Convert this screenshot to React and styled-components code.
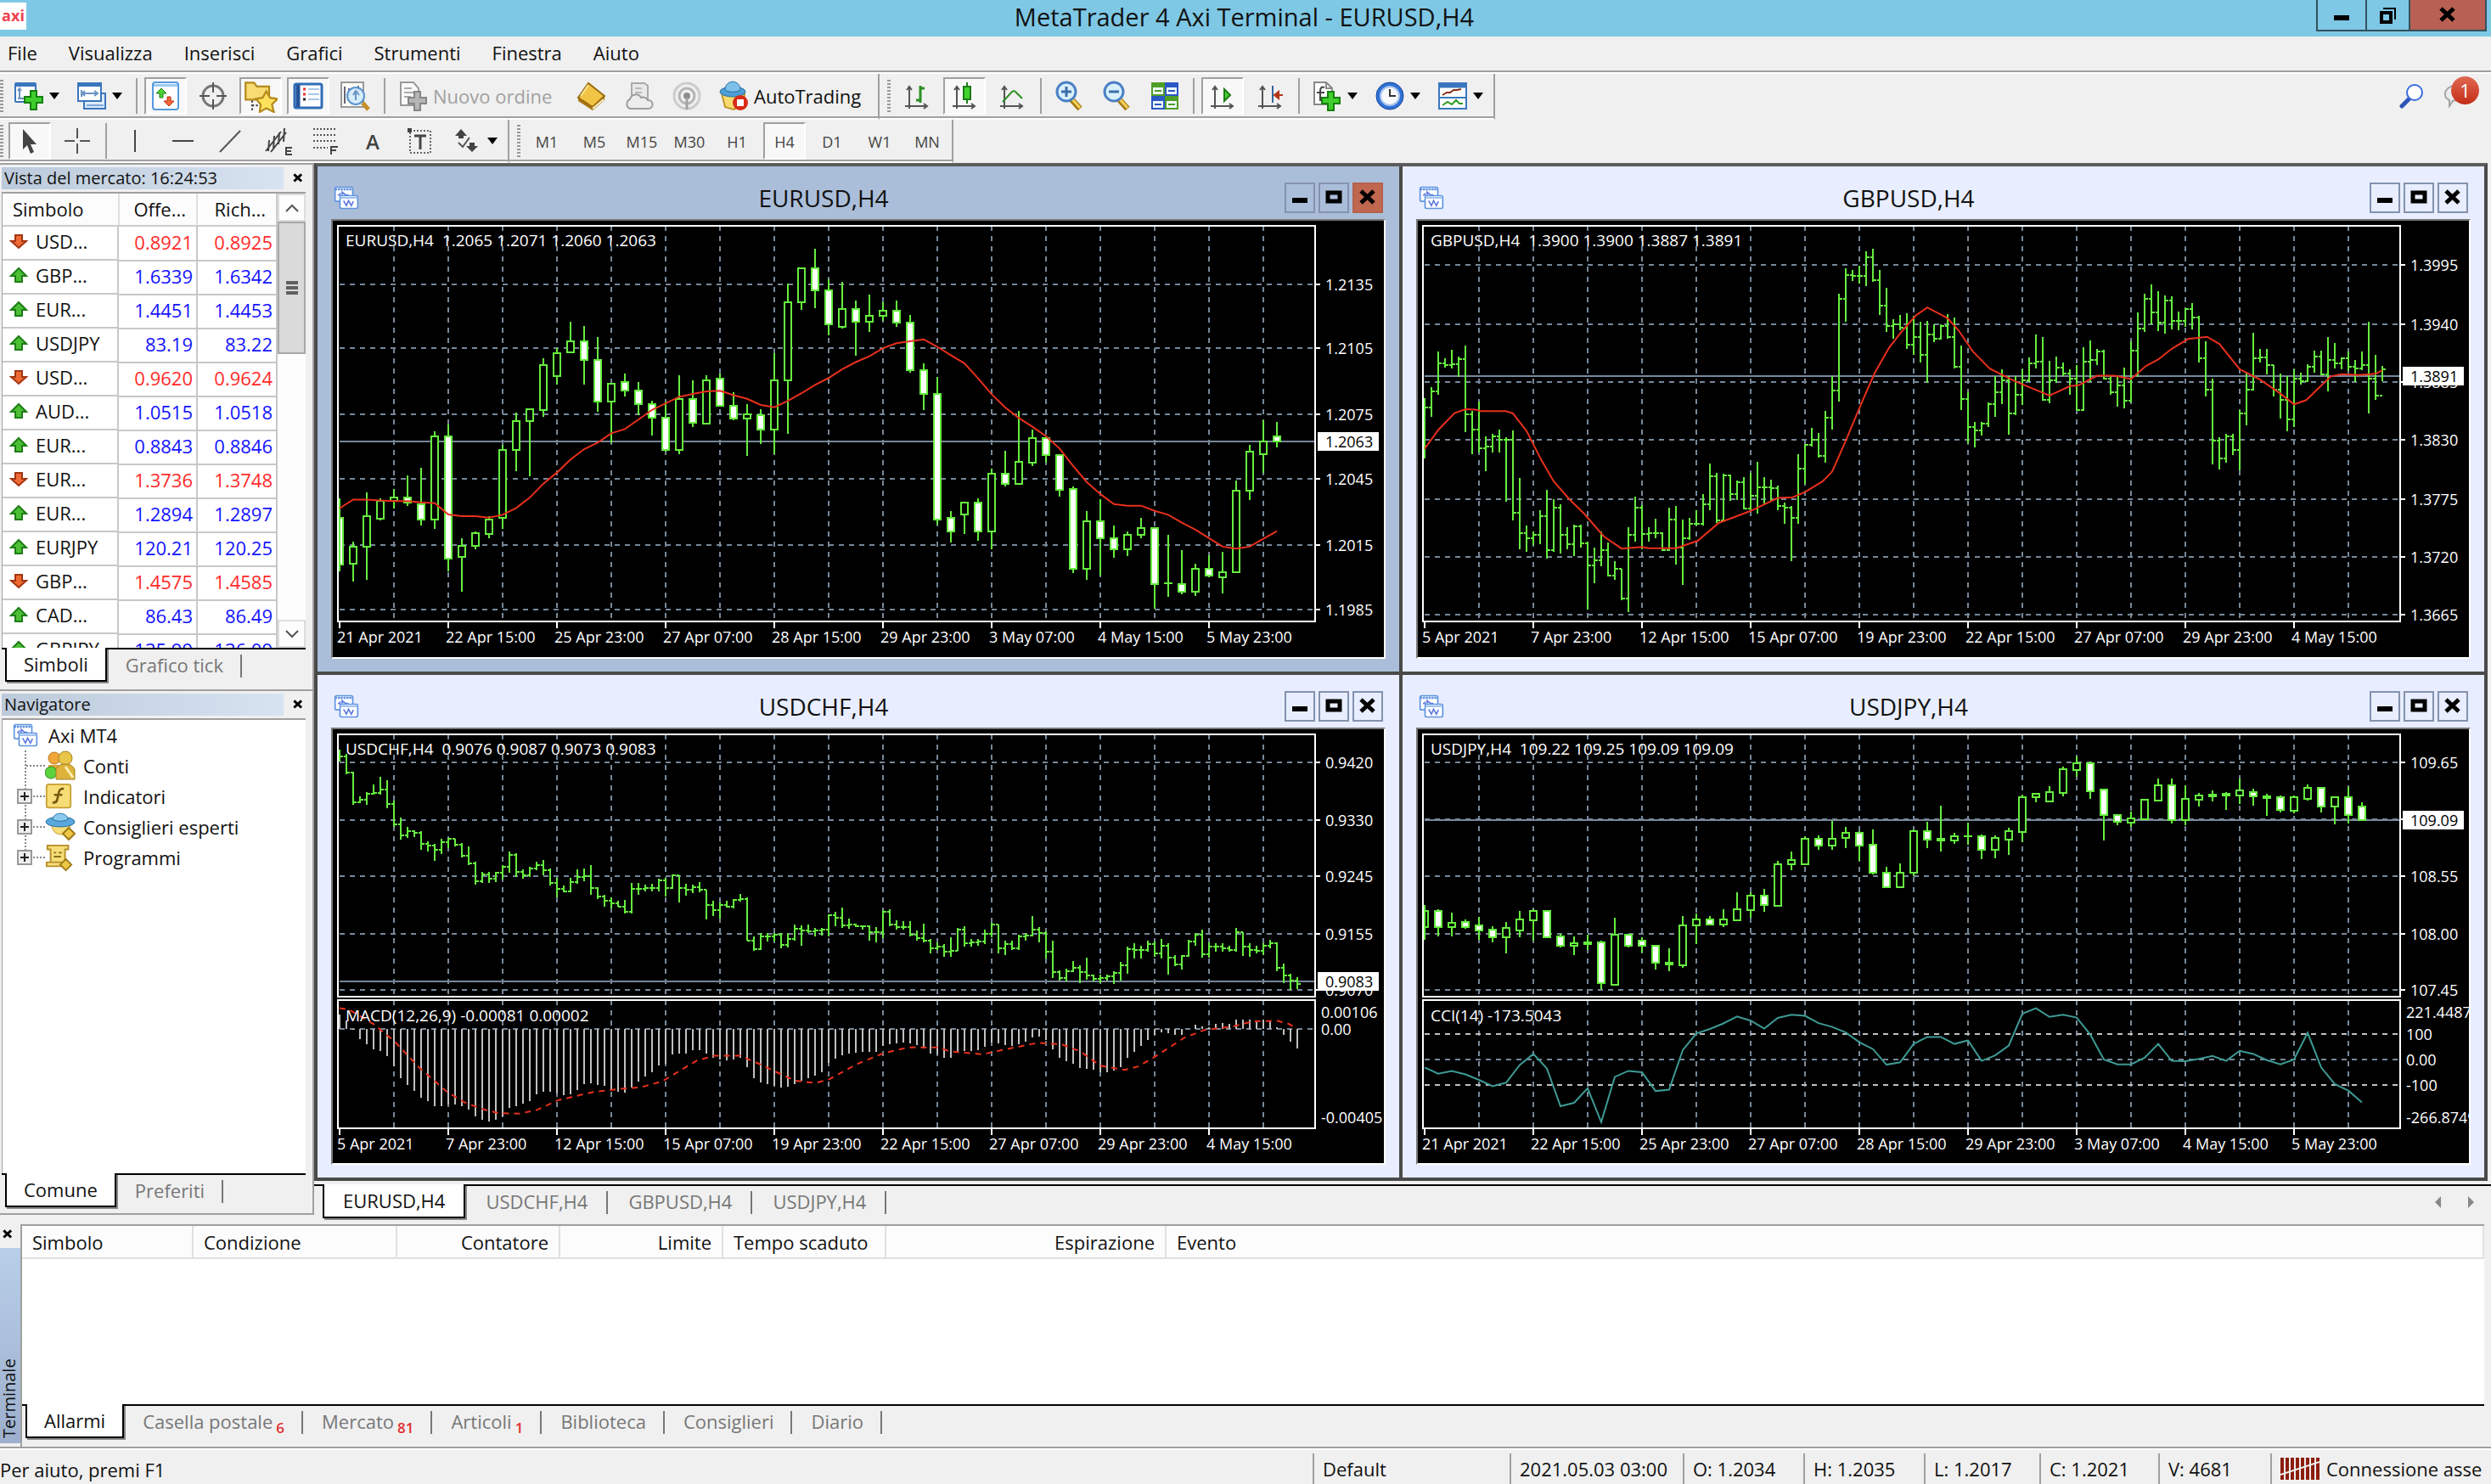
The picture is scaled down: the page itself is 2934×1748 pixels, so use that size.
import { useState } from "react";
import styled, { createGlobalStyle } from "styled-components";

const GREEN = "#66ee3f";
const GRID = "#778899";
const RED = "#e8301c";

// ---------------------------------------------------------------- data

// body top, body bottom, high, low, filled
const eurusd = [
  [1098, 1240, 1038, 1262, 1], [1186, 1239, 1170, 1293, 0], [1092, 1187, 1018, 1287, 0], [1045, 1099, 1038, 1104, 0],
  [1034, 1046, 1008, 1068, 0], [1034, 1051, 966, 1062, 1], [1055, 1103, 944, 1120, 1], [846, 1103, 830, 1131, 0],
  [847, 1224, 810, 1262, 1], [1183, 1218, 1160, 1324, 0], [1144, 1183, 1138, 1193, 0], [1103, 1146, 1093, 1161, 0],
  [888, 1098, 872, 1131, 0], [799, 889, 773, 954, 0], [762, 800, 762, 970, 0], [628, 765, 605, 787, 0],
  [590, 660, 575, 686, 0], [554, 587, 495, 587, 0], [554, 612, 506, 686, 1], [612, 739, 542, 770, 1],
  [684, 739, 684, 868, 0], [679, 706, 653, 723, 1], [706, 748, 679, 780, 1], [747, 790, 736, 844, 1],
  [790, 889, 740, 893, 1], [731, 889, 658, 901, 0], [731, 806, 674, 817, 1], [674, 807, 658, 807, 0],
  [669, 753, 653, 753, 1], [753, 791, 711, 796, 1], [779, 791, 747, 907, 0], [780, 826, 762, 870, 1],
  [674, 826, 590, 901, 0], [434, 675, 377, 838, 0], [330, 435, 330, 457, 0], [329, 398, 270, 452, 1],
  [398, 502, 362, 535, 1], [454, 509, 370, 515, 0], [454, 493, 429, 598, 1], [476, 493, 411, 525, 0],
  [460, 476, 434, 490, 0], [460, 497, 428, 509, 1], [497, 643, 474, 650, 1], [643, 717, 621, 766, 1],
  [716, 1103, 663, 1119, 1], [1098, 1140, 1076, 1172, 1], [1050, 1087, 1050, 1146, 0], [1050, 1140, 1038, 1167, 1],
  [962, 1140, 945, 1193, 0], [962, 994, 892, 1000, 1], [926, 994, 768, 994, 0], [852, 927, 825, 937, 0],
  [851, 905, 851, 928, 1], [905, 1010, 905, 1031, 1], [1008, 1255, 1002, 1267, 1], [1108, 1255, 1076, 1287, 0],
  [1108, 1161, 1039, 1274, 1], [1161, 1193, 1122, 1219, 1], [1149, 1193, 1139, 1214, 0], [1129, 1151, 1097, 1161, 0],
  [1129, 1302, 1129, 1377, 1], [1298, 1300, 1149, 1340, 1], [1302, 1324, 1196, 1333, 1], [1254, 1324, 1238, 1339, 0],
  [1254, 1276, 1212, 1281, 1], [1265, 1281, 1202, 1329, 0], [1014, 1265, 982, 1265, 0], [893, 1015, 872, 1042, 0],
  [863, 901, 797, 960, 0], [847, 863, 803, 880, 1],
];

const eurusdMa = [
  1068, 1041, 1041, 1044, 1046, 1046, 1050, 1052, 1087, 1092, 1092, 1097, 1088, 1067, 1035, 992, 958, 918, 886, 866,
  837, 824, 795, 765, 745, 725, 716, 708, 706, 720, 731, 750, 757, 737, 714, 688, 667, 640, 618, 600, 575, 560, 554,
  548, 571, 597, 622, 668, 717, 758, 790, 817, 846, 884, 938, 987, 1024, 1055, 1060, 1060, 1076, 1088, 1112, 1134,
  1160, 1186, 1192, 1186, 1162, 1138,
];

const usdjpy = [
  [693, 740, 675, 776, 0], [693, 740, 688, 767, 1], [728, 740, 698, 766, 0], [724, 740, 718, 746, 1],
  [734, 750, 710, 776, 1], [748, 770, 738, 784, 1], [743, 770, 724, 815, 0], [718, 750, 693, 770, 0],
  [693, 720, 688, 780, 0], [693, 770, 690, 772, 1], [767, 794, 760, 798, 1], [787, 794, 767, 820, 0],
  [783, 789, 762, 805, 1], [783, 902, 780, 918, 1], [763, 907, 713, 907, 0], [763, 794, 763, 798, 1],
  [778, 794, 770, 813, 1], [793, 843, 793, 863, 1], [842, 848, 802, 868, 1], [735, 849, 708, 858, 0],
  [718, 736, 700, 790, 0], [718, 732, 708, 735, 1], [718, 732, 688, 740, 0], [688, 720, 640, 720, 0],
  [650, 691, 640, 713, 0], [650, 677, 630, 697, 1], [558, 678, 550, 682, 0], [547, 559, 522, 575, 0],
  [484, 558, 477, 558, 0], [484, 505, 475, 517, 1], [484, 505, 433, 516, 0], [468, 482, 452, 512, 0],
  [468, 505, 462, 550, 1], [502, 583, 457, 588, 1], [582, 625, 567, 628, 1], [582, 625, 557, 628, 0],
  [463, 583, 458, 592, 0], [463, 487, 437, 512, 1], [484, 490, 390, 522, 1], [478, 491, 468, 501, 0],
  [478, 481, 438, 502, 1], [478, 516, 474, 545, 1], [483, 516, 476, 541, 0], [463, 487, 453, 531, 0],
  [365, 466, 357, 495, 0], [355, 366, 355, 380, 0], [350, 378, 332, 378, 0], [283, 354, 278, 363, 0],
  [267, 287, 248, 307, 0], [267, 349, 263, 370, 1], [343, 416, 340, 491, 1], [416, 437, 413, 446, 1],
  [426, 438, 406, 452, 0], [372, 429, 370, 432, 0], [331, 375, 312, 378, 0], [331, 430, 312, 441, 1],
  [371, 431, 330, 447, 0], [360, 373, 353, 393, 0], [357, 362, 346, 377, 1], [355, 360, 350, 403, 1],
  [345, 359, 312, 384, 0], [350, 362, 340, 390, 1], [362, 367, 356, 418, 1], [366, 403, 361, 408, 1],
  [366, 404, 360, 412, 0], [337, 370, 328, 375, 0], [337, 393, 337, 408, 1], [366, 393, 366, 443, 0],
  [366, 417, 336, 441, 1], [391, 432, 380, 433, 1],
];

const cci = [
  1145, 1163, 1155, 1165, 1181, 1199, 1189, 1138, 1106, 1148, 1257, 1247, 1205, 1303, 1172, 1155, 1159, 1213, 1209,
  1095, 1047, 1034, 1018, 998, 1010, 1033, 1002, 993, 996, 1017, 1028, 1044, 1072, 1092, 1137, 1130, 1077, 1057, 1057,
  1077, 1067, 1126, 1110, 1082, 990, 974, 999, 993, 1001, 1050, 1122, 1136, 1136, 1117, 1077, 1126, 1127, 1120, 1112,
  1126, 1097, 1106, 1124, 1136, 1122, 1045, 1145, 1193, 1212, 1246,
];

// high, low, close
const gbpusd = [
  [730, 915, 757], [694, 786, 707], [585, 718, 622], [605, 634, 627], [579, 637, 625], [600, 665, 610],
  [568, 833, 778], [768, 901, 826], [740, 897, 883], [846, 953, 879], [840, 895, 847], [825, 895, 857],
  [850, 1047, 857], [828, 1105, 1082], [975, 1193, 1145], [1122, 1203, 1160], [1138, 1180, 1150], [1075, 1178, 1093],
  [1012, 1224, 1198], [1040, 1203, 1065], [1055, 1208, 1150], [1127, 1195, 1178], [1118, 1214, 1124],
  [1118, 1188, 1177], [1170, 1380, 1243], [1188, 1298, 1228], [1138, 1246, 1196], [1172, 1278, 1276],
  [1232, 1287, 1254], [1254, 1350, 1345], [1127, 1387, 1150], [1033, 1170, 1066], [1058, 1193, 1146],
  [1127, 1170, 1145], [1100, 1160, 1145], [1143, 1200, 1198], [1065, 1200, 1102], [1060, 1240, 1190],
  [1102, 1303, 1161], [1097, 1165, 1115], [1075, 1122, 1116], [1023, 1120, 1055], [930, 1073, 970],
  [960, 1113, 1105], [962, 1110, 966], [965, 1045, 1025], [982, 1042, 988], [972, 1072, 1068], [960, 1075, 1030],
  [924, 1085, 1003], [972, 1055, 1003], [980, 1047, 1007], [998, 1075, 1062], [1050, 1115, 1066],
  [1060, 1230, 1098], [902, 1115, 945], [870, 992, 872], [820, 878, 858], [835, 912, 906], [768, 927, 790],
  [660, 827, 706], [407, 740, 424], [328, 493, 350], [335, 368, 352], [322, 375, 352], [277, 383, 294],
  [270, 370, 366], [335, 473, 445], [390, 524, 508], [485, 545, 503], [473, 520, 513], [468, 578, 565],
  [475, 597, 540], [495, 618, 597], [490, 682, 534], [503, 556, 545], [502, 550, 507], [470, 545, 540],
  [480, 637, 633], [568, 765, 732], [710, 868, 817], [802, 880, 828], [802, 843, 808], [743, 817, 748],
  [660, 787, 712], [640, 748, 675], [662, 842, 775], [662, 780, 718], [640, 750, 675], [603, 680, 622],
  [532, 637, 617], [540, 738, 733], [615, 745, 675], [600, 682, 634], [618, 660, 653], [640, 718, 668],
  [628, 765, 765], [573, 767, 617], [552, 680, 612], [577, 627, 585], [580, 672, 670], [660, 718, 712],
  [658, 755, 690], [636, 760, 738], [555, 742, 582], [465, 665, 515], [407, 525, 422], [380, 502, 465],
  [400, 523, 497], [412, 530, 428], [416, 518, 490], [463, 520, 492], [452, 510, 455], [436, 518, 482],
  [475, 620, 606], [553, 725, 702], [668, 932, 860], [850, 948, 915], [840, 927, 847], [840, 905, 888],
  [765, 952, 775], [648, 812, 703], [527, 705, 607], [578, 618, 603], [578, 655, 628], [628, 725, 703],
  [652, 792, 735], [660, 832, 795], [640, 817, 670], [650, 686, 678], [625, 680, 633], [583, 650, 602],
  [584, 658, 655], [542, 708, 612], [560, 638, 622], [603, 640, 605], [585, 645, 632], [612, 680, 638],
  [585, 642, 628], [495, 775, 670], [595, 733, 720], [630, 677, 640],
];

// bar index, value
const gbpusdMa = [
  [0, 885], [2, 827], [4.4, 775], [6, 763], [7.5, 764], [8.2, 769], [12, 769], [13, 776], [15, 830], [17.2, 920],
  [19, 985], [21.3, 1040], [23.5, 1085], [26.4, 1155], [29, 1192], [32, 1187], [33, 1191], [37, 1191], [40.2, 1168],
  [43.3, 1113], [48, 1076], [52, 1036], [54.2, 1034], [56, 1018], [58.6, 985], [60, 955], [62, 860], [64.3, 745],
  [66.3, 650], [68.4, 573], [70.4, 520], [72.3, 475], [74, 450], [77, 483], [78.6, 520], [80.7, 585], [83.2, 638],
  [86.8, 676], [92, 721], [95, 692], [96.2, 690], [99, 660], [101.6, 660], [104, 670], [106.2, 630], [108, 610],
  [110, 577], [112.4, 547], [115.2, 540], [117, 562], [120, 640], [123, 672], [126, 715], [128, 748], [129.8, 735],
  [133.4, 662], [135, 655], [137.5, 658], [140, 654], [141, 643],
];

const usdchf = [
  [228, 262, 248], [240, 300, 293], [292, 387, 379], [362, 382, 372], [350, 387, 355], [328, 358, 352],
  [306, 358, 343], [317, 397, 385], [376, 452, 443], [425, 487, 475], [450, 482, 463], [460, 480, 468],
  [463, 518, 500], [493, 522, 504], [500, 550, 518], [485, 530, 494], [483, 512, 485], [485, 508, 502],
  [498, 540, 535], [508, 560, 556], [552, 618, 607], [580, 613, 588], [580, 612, 600], [580, 610, 583],
  [562, 603, 565], [522, 582, 532], [527, 595, 580], [573, 600, 590], [565, 595, 570], [552, 575, 562],
  [547, 590, 575], [572, 620, 612], [597, 653, 630], [620, 640, 637], [597, 640, 610], [573, 615, 595],
  [570, 608, 592], [562, 647, 628], [625, 658, 652], [648, 682, 664], [655, 685, 672], [665, 682, 680],
  [662, 700, 695], [613, 700, 630], [612, 647, 630], [617, 637, 627], [615, 637, 628], [600, 637, 605],
  [598, 652, 628], [587, 630, 590], [590, 668, 628], [615, 650, 632], [617, 642, 625], [610, 640, 633],
  [632, 717, 675], [665, 707, 690], [670, 715, 675], [663, 683, 680], [658, 687, 662], [645, 667, 658],
  [653, 780, 778], [768, 808, 803], [757, 807, 768], [757, 782, 768], [758, 782, 762], [757, 800, 792],
  [757, 798, 775], [733, 780, 745], [735, 795, 750], [733, 757, 752], [742, 768, 750], [742, 765, 748],
  [703, 768, 706], [695, 737, 712], [683, 743, 735], [715, 745, 733], [730, 740, 738], [735, 748, 738],
  [735, 780, 755], [740, 783, 755], [690, 772, 697], [688, 737, 733], [720, 748, 740], [722, 748, 740],
  [722, 768, 762], [750, 780, 772], [730, 785, 778], [775, 815, 800], [783, 805, 797], [790, 825, 810],
  [770, 825, 808], [742, 808, 747], [737, 797, 787], [773, 797, 785], [775, 795, 782], [748, 790, 760],
  [728, 770, 733], [733, 817, 800], [780, 820, 790], [780, 805, 800], [762, 805, 768], [757, 778, 765],
  [708, 768, 748], [740, 785, 757], [752, 830, 812], [780, 888, 870], [866, 895, 887], [860, 897, 868],
  [837, 870, 857], [850, 902, 870], [827, 893, 880], [877, 897, 890], [877, 902, 888], [878, 895, 882],
  [868, 903, 872], [840, 895, 850], [797, 875, 803], [787, 830, 805], [795, 830, 805], [780, 810, 790],
  [782, 825, 815], [773, 830, 793], [787, 878, 828], [820, 853, 847], [820, 862, 823], [777, 825, 782],
  [758, 795, 762], [748, 828, 818], [783, 828, 797], [787, 810, 797], [787, 812, 800], [793, 812, 806],
  [742, 810, 755], [755, 822, 797], [787, 825, 805], [795, 817, 808], [787, 820, 793], [777, 800, 787],
  [785, 868, 857], [845, 902, 880], [875, 920, 895], [885, 918, 903],
];

const macd = [
  993, 1010, 1036, 1064, 1077, 1093, 1098, 1112, 1142, 1176, 1195, 1212, 1232, 1243, 1257, 1256, 1252, 1252, 1257,
  1267, 1287, 1295, 1300, 1296, 1286, 1262, 1256, 1250, 1242, 1222, 1216, 1216, 1220, 1226, 1222, 1210, 1192, 1190,
  1196, 1198, 1208, 1214, 1217, 1202, 1187, 1172, 1158, 1140, 1135, 1108, 1106, 1105, 1095, 1095, 1106, 1116, 1123,
  1125, 1121, 1117, 1143, 1175, 1188, 1192, 1197, 1202, 1200, 1192, 1183, 1175, 1168, 1158, 1133, 1119, 1110, 1106,
  1103, 1100, 1099, 1100, 1082, 1078, 1075, 1072, 1076, 1081, 1090, 1105, 1108, 1118, 1117, 1103, 1098, 1098, 1094,
  1085, 1073, 1076, 1080, 1082, 1077, 1070, 1058, 1056, 1066, 1092, 1118, 1128, 1135, 1147, 1150, 1152, 1158, 1158,
  1155, 1145, 1118, 1101, 1083, 1066, 1052, 1044, 1046, 1050, 1050, 1033, 1021, 1026, 1028, 1018, 1017, 1018, 1008,
  1008, 1008, 1012, 1006, 1010, 1030, 1050, 1070, 1090,
];

const macdSignal = [
  [0, 974], [1.4, 978], [5, 1020], [8.1, 1070], [11.7, 1145], [15.8, 1215], [18.3, 1245], [20.9, 1264], [23.4, 1277],
  [26.5, 1278], [29, 1268], [32.1, 1240], [37.3, 1216], [41.3, 1207], [44.4, 1202], [47.5, 1185], [52.6, 1125],
  [55.2, 1111], [59, 1111], [61.8, 1135], [67, 1183], [70, 1190], [72, 1180], [76.2, 1135], [80.2, 1103],
  [83.8, 1087], [88, 1087], [90, 1099], [94.6, 1107], [98.7, 1090], [102.8, 1074], [106.3, 1078], [109, 1098],
  [112, 1140], [115.6, 1152], [117.6, 1142], [120.2, 1112], [124.3, 1060], [127.3, 1037], [131.4, 1027],
  [134.5, 1012], [138, 1010], [139.6, 1018], [141, 1033],
];

const datesShort = [
  "5 Apr 2021", "7 Apr 23:00", "12 Apr 15:00", "15 Apr 07:00", "19 Apr 23:00", "22 Apr 15:00", "27 Apr 07:00",
  "29 Apr 23:00", "4 May 15:00",
];
const datesLong = [
  "21 Apr 2021", "22 Apr 15:00", "25 Apr 23:00", "27 Apr 07:00", "28 Apr 15:00", "29 Apr 23:00", "3 May 07:00",
  "4 May 15:00", "5 May 23:00",
];

const charts = [
  {
    name: "EURUSD,H4",
    info: "EURUSD,H4  1.2065 1.2071 1.2060 1.2063",
    height: 514,
    toY: (v) => v / 2.613 - 70,
    step: 16,
    candles: eurusd,
    ma: eurusdMa.map((v, i) => [i, v]),
    grid: [[378, "1.2135"], [576, "1.2105"], [779, "1.2075"], [978, "1.2045"], [1182, "1.2015"], [1380, "1.1985"]],
    price: [862, "1.2063"],
    dates: datesLong,
    plots: [[6, 472]],
  },
  {
    name: "GBPUSD,H4",
    info: "GBPUSD,H4  1.3900 1.3900 1.3887 1.3891",
    height: 514,
    toY: (v) => v / 2.613 - 70,
    step: 8,
    bars: gbpusd,
    ma: gbpusdMa,
    grid: [
      [320, "1.3995"], [502, "1.3940"], [680, "1.3885"], [858, "1.3830"], [1040, "1.3775"], [1218, "1.3720"],
      [1395, "1.3665"],
    ],
    price: [660, "1.3891"],
    dates: datesShort,
    plots: [[6, 472]],
  },
  {
    name: "USDCHF,H4",
    info: "USDCHF,H4  0.9076 0.9087 0.9073 0.9083",
    height: 511,
    toY: (v) => v / 2.45 - 69,
    step: 8,
    bars: usdchf,
    grid: [[265, "0.9420"], [432, "0.9330"], [593, "0.9245"], [760, "0.9155"], [920, "0.9070"]],
    price: [896, "0.9083"],
    dates: datesShort,
    plots: [[6, 315], [319, 470]],
    sub: "MACD(12,26,9) -0.00081 0.00002",
    subLabels: [[985, "0.00106"], [1033, "0.00"], [1289, "-0.00405"]],
    levels: [[1033, GRID]],
    histogram: macd,
    signal: macdSignal,
  },
  {
    name: "USDJPY,H4",
    info: "USDJPY,H4  109.22 109.25 109.09 109.09",
    height: 511,
    toY: (v) => v / 2.45 - 69,
    step: 16,
    candles: usdjpy,
    grid: [[265, "109.65"], [428, "109.10"], [593, "108.55"], [760, "108.00"], [920, "107.45"]],
    price: [431, "109.09"],
    dates: datesLong,
    plots: [[6, 315], [319, 470]],
    sub: "CCI(14) -173.5043",
    subLabels: [[985, "221.4487"], [1048, "100"], [1122, "0.00"], [1195, "-100"], [1289, "-266.8749"]],
    levels: [[1048, "#c0c0c0"], [1122, GRID], [1195, "#c0c0c0"]],
    cci: cci,
  },
];

const quotes = [
  ["USD...", "0.8921", "0.8925", 0],
  ["GBP...", "1.6339", "1.6342", 1],
  ["EUR...", "1.4451", "1.4453", 1],
  ["USDJPY", "83.19", "83.22", 1],
  ["USD...", "0.9620", "0.9624", 0],
  ["AUD...", "1.0515", "1.0518", 1],
  ["EUR...", "0.8843", "0.8846", 1],
  ["EUR...", "1.3736", "1.3748", 0],
  ["EUR...", "1.2894", "1.2897", 1],
  ["EURJPY", "120.21", "120.25", 1],
  ["GBP...", "1.4575", "1.4585", 0],
  ["CAD...", "86.43", "86.49", 1],
  ["GBPJPY", "135.99", "136.09", 1],
];

// ---------------------------------------------------------------- chart

const X0 = 8;
const RIGHT = 1157;

const Chart = ({ chart }) => {
  const { toY, step, height, plots, grid, price } = chart;
  const y = (v) => Math.round(toY(v));
  const x = (i) => Math.round(X0 + i * step);
  const path = (points) => points.map(([i, v]) => `${X0 + i * step},${toY(v)}`).join(" ");
  const bottom = plots[plots.length - 1][1];
  const columns = Array.from({ length: 17 }, (_, k) => X0 + 64 * (k + 1));

  return (
    <ChartSvg viewBox={`0 0 1238 ${height}`} role="img" aria-label={chart.name}>
      {plots.map(([top, end]) =>
        columns.map((cx) => (
          <line key={`${top}-${cx}`} x1={cx} x2={cx} y1={top} y2={end} stroke={GRID} strokeWidth="2" strokeDasharray="6 6" />
        ))
      )}
      {grid.map(([v]) => (
        <line key={v} x1="8" x2={RIGHT} y1={y(v)} y2={y(v)} stroke={GRID} strokeWidth="2" strokeDasharray="6 6" />
      ))}
      {chart.levels?.map(([v, color]) => (
        <line key={v} x1="8" x2={RIGHT} y1={y(v)} y2={y(v)} stroke={color} strokeWidth="2" strokeDasharray="6 6" />
      ))}
      <line x1="8" x2={RIGHT} y1={y(price[0])} y2={y(price[0])} stroke={GRID} strokeWidth="2" />

      {chart.bars?.map(([high, low, close], i, all) => (
        <path
          key={i}
          d={`M${x(i)} ${y(high)}V${y(low)}M${x(i) - 3} ${y(i ? all[i - 1][2] : close)}h3M${x(i)} ${y(close)}h4`}
          stroke={GREEN}
          strokeWidth="2"
        />
      ))}
      {chart.candles?.map(([top, end, high, low, filled], i) => (
        <g key={i} stroke={GREEN} strokeWidth="2">
          <path d={`M${x(i)} ${y(high)}V${y(top)}M${x(i)} ${y(end)}V${y(low)}`} />
          {end - top < 4 ? (
            <path d={`M${x(i) - 5} ${y(top)}h10`} />
          ) : (
            <rect
              x={Math.max(x(i) - 4, 8)}
              y={y(top)}
              width={i ? 8 : 4}
              height={Math.max(y(end) - y(top), 2)}
              fill={filled ? "#fff" : "#000"}
            />
          )}
        </g>
      ))}
      {chart.ma && <polyline points={path(chart.ma)} fill="none" stroke={RED} strokeWidth="2" />}
      {chart.histogram?.map((v, i) => (
        <path key={i} d={`M${x(i)} ${y(1033)}V${y(v)}`} stroke="#c0c0c0" strokeWidth="2" />
      ))}
      {chart.signal && (
        <polyline points={path(chart.signal)} fill="none" stroke={RED} strokeWidth="2" strokeDasharray="7 6" />
      )}
      {chart.cci && (
        <polyline points={path(chart.cci.map((v, i) => [i, v]))} fill="none" stroke="#3d9a94" strokeWidth="2" />
      )}

      {plots.map(([top, end]) => (
        <rect key={top} x="6" y={top} width={RIGHT - 6} height={end - top} fill="none" stroke="#fff" strokeWidth="2" />
      ))}
      {chart.dates.map((date, i) => (
        <g key={date}>
          <path d={`M${X0 + i * 128} ${bottom}v8`} stroke="#fff" strokeWidth="2" />
          <text x={X0 - 3 + i * 128} y={bottom + 25}>
            {date}
          </text>
        </g>
      ))}
      {grid.map(([v, label]) => (
        <g key={label}>
          <path d={`M${RIGHT} ${y(v)}h6`} stroke="#fff" strokeWidth="2" />
          <text x="1169" y={y(v) + 7}>
            {label}
          </text>
        </g>
      ))}
      {chart.subLabels?.map(([v, label]) => (
        <text key={label} x="1164" y={y(v) + 7}>
          {label}
        </text>
      ))}
      <rect x="1160" y={y(price[0]) - 11} width="72" height="22" fill="#fff" />
      <PriceText x="1169" y={y(price[0]) + 7}>
        {price[1]}
      </PriceText>
      <InfoText x="15" y="30">
        {chart.info}
      </InfoText>
      {chart.sub && (
        <InfoText x="15" y="344">
          {chart.sub}
        </InfoText>
      )}
    </ChartSvg>
  );
};

// ---------------------------------------------------------------- icons

const Icon = ({ size = 36, children }) => (
  <svg width={size} height={size} viewBox="0 0 36 36" fill="none" aria-hidden="true">
    {children}
  </svg>
);

const Plus = ({ x, y, fill = "#3fce2c", stroke = "#15800f" }) => (
  <path
    transform={`translate(${x} ${y})`}
    d="M7 0h7v7h7v7h-7v8H7v-8H0V7h7z"
    fill={fill}
    stroke={stroke}
    strokeWidth="2"
  />
);

const Axes = () => (
  <path d="M9 33V7M6 11l3-4 3 4M4 30h26M26 27l4 3-4 3" stroke="#555" strokeWidth="2" />
);

const Lens = ({ sign }) => (
  <Icon>
    <path d="M20 22l10 11" stroke="#a97a16" strokeWidth="7" />
    <path d="M21 22l9 10" stroke="#f5d35a" strokeWidth="3" />
    <circle cx="14" cy="13" r="11" fill="#d9f0fc" stroke="#4b80c4" strokeWidth="3" />
    <path d={sign} stroke="#3b6ea8" strokeWidth="3" />
  </Icon>
);

const icons = {
  newChart: (
    <Icon>
      <rect x="2" y="3" width="24" height="22" rx="1" fill="#fff" stroke="#3a76bd" strokeWidth="2" />
      <path d="M2 5h24" stroke="#3a76bd" strokeWidth="4" />
      <path d="M7 10v11M5 12l2-3 2 3M5 21h14" stroke="#6b93c4" strokeWidth="2" />
      <Plus x={13} y={12} />
    </Icon>
  ),
  profiles: (
    <Icon>
      <rect x="9" y="15" width="25" height="18" fill="#dcecfb" stroke="#3a76bd" strokeWidth="2" />
      <path d="M12 29h20" stroke="#7fa9da" strokeWidth="2" />
      <rect x="2" y="3" width="27" height="21" fill="#fff" stroke="#3a76bd" strokeWidth="2" />
      <path d="M2 5h27" stroke="#3a76bd" strokeWidth="4" />
      <path d="M6 11v8M6 15h18M21 12l4 3-4 3M10 12l-3 3 3 3" stroke="#6b93c4" strokeWidth="2" />
    </Icon>
  ),
  market: (
    <Icon>
      <rect x="3" y="2" width="30" height="32" rx="3" fill="#fff" stroke="#559ade" strokeWidth="2" />
      <path d="M4 4h28v3H4z" fill="#9ccaf4" />
      <path d="M7 15l6-6 6 6h-4v5h-4v-5z" fill="#4fd236" stroke="#1c8314" />
      <path d="M16 24l6 6 6-6h-4v-5h-4v5z" fill="#f2673c" stroke="#bb2e0d" />
    </Icon>
  ),
  target: (
    <Icon>
      <circle cx="18" cy="18" r="12" stroke="#777" strokeWidth="3" />
      <path d="M18 2v12M18 22v12M2 18h12M22 18h12" stroke="#555" strokeWidth="2" />
    </Icon>
  ),
  folderStar: (
    <Icon size={40}>
      <path d="M2 4h9l3 4h13v14H2z" fill="#f6dc72" stroke="#b48a1c" strokeWidth="2" />
      <path d="M9 23v11M9 28h8" stroke="#444" strokeWidth="2" strokeDasharray="2 2" />
      <path d="M24 13l4 7 8 1-6 6 2 8-8-4-7 4 1-8-5-6 7-1z" fill="#fde15d" stroke="#b48a1c" strokeWidth="2" />
    </Icon>
  ),
  dataWindow: (
    <Icon>
      <rect x="2" y="4" width="32" height="28" rx="2" fill="#fff" stroke="#2f6db7" strokeWidth="3" />
      <path d="M6 5v26" stroke="#24549a" strokeWidth="5" />
      <path d="M12 10h3M12 16h3" stroke="#e33" strokeWidth="3" />
      <path d="M12 22h3" stroke="#222" strokeWidth="3" />
      <path d="M18 10h13M18 16h13M18 22h13" stroke="#a9c6ea" strokeWidth="2" />
    </Icon>
  ),
  tester: (
    <Icon>
      <rect x="1" y="2" width="26" height="29" fill="#fdfdf6" stroke="#999" strokeWidth="2" />
      <path d="M5 7v20M10 9v9M21 6v9" stroke="#667" strokeWidth="2" />
      <path d="M26 26l7 8" stroke="#c4912a" strokeWidth="5" />
      <circle cx="18" cy="18" r="10" fill="#d3ebfb" fillOpacity=".9" stroke="#5a93cf" strokeWidth="2" />
      <path d="M18 12v11M15 17l3-5 4 5" stroke="#6b93c4" strokeWidth="2" />
    </Icon>
  ),
  order: (
    <Icon>
      <path d="M4 2h15l6 7v20H4z" fill="#fafafa" stroke="#999" strokeWidth="2" />
      <path d="M8 9h9M8 14h13M8 19h8" stroke="#aaa" strokeWidth="2" />
      <Plus x={13} y={13} fill="#b5b5b5" stroke="#858585" />
    </Icon>
  ),
  book: (
    <Icon>
      <path d="M2 20L14 3l19 15v5L19 35 2 24z" fill="#a97714" />
      <path d="M2 20L14 3l19 15-14 13z" fill="#f2c445" stroke="#9a6c12" strokeWidth="2" />
      <path d="M14 5L5 18" stroke="#fbe59a" strokeWidth="2" />
      <path d="M19 33l13-11" stroke="#fff3c8" strokeWidth="2" />
    </Icon>
  ),
  vps: (
    <Icon>
      <path d="M9 3h15l4 3v16H9z" fill="#e9e9e9" stroke="#aaa" strokeWidth="2" />
      <path d="M13 9h8M13 14h8" stroke="#bbb" strokeWidth="2" />
      <path d="M7 33a6 6 0 010-11 7 7 0 0113-2 6 6 0 018 3 5 5 0 011 10z" fill="#ececec" stroke="#9d9d9d" strokeWidth="2" />
    </Icon>
  ),
  signals: (
    <Icon>
      <circle cx="18" cy="18" r="15" stroke="#ccc" strokeWidth="3" />
      <circle cx="18" cy="18" r="9" stroke="#b5b5b5" strokeWidth="3" />
      <circle cx="18" cy="18" r="4" fill="#8d8d8d" />
      <path d="M18 20v14" stroke="#a2a2a2" strokeWidth="3" />
    </Icon>
  ),
  autoTrading: (
    <Icon>
      <path d="M4 15l4 16 10 3 12-6 1-13z" fill="#f8dc72" stroke="#c2962b" strokeWidth="2" />
      <ellipse cx="17" cy="13" rx="15" ry="6" fill="#4d9dd6" stroke="#26709f" />
      <path d="M8 11c0-13 18-13 18 0-4 3-14 3-18 0z" fill="#7dc0ec" stroke="#26709f" />
      <circle cx="26" cy="26" r="9" fill="#d92b15" />
      <rect x="22" y="22" width="8" height="8" fill="#fff" />
    </Icon>
  ),
  barChart: (
    <Icon>
      <Axes />
      <path d="M22 6v20M22 9h5M17 23h5" stroke="#2b8f22" strokeWidth="3" />
    </Icon>
  ),
  candleChart: (
    <Icon>
      <Axes />
      <path d="M21 2v25" stroke="#1d7d17" strokeWidth="2" />
      <rect x="17" y="7" width="8" height="15" fill="#43d12f" stroke="#1d7d17" strokeWidth="2" />
    </Icon>
  ),
  lineChart: (
    <Icon>
      <Axes />
      <path d="M7 25l11-12q3-2 5 1l7 7" stroke="#2b8f22" strokeWidth="2" />
    </Icon>
  ),
  zoomIn: <Lens sign="M8 13h12M14 7v12" />,
  zoomOut: <Lens sign="M8 13h12" />,
  tile: (
    <Icon>
      {[
        [2, 2, "#4f9e26"],
        [18, 2, "#2a58c4"],
        [2, 18, "#2a58c4"],
        [18, 18, "#4f9e26"],
      ].map(([tx, ty, fill]) => (
        <g key={`${tx}-${ty}`}>
          <rect x={tx} y={ty} width="16" height="16" fill={fill} />
          <rect x={tx + 2} y={ty + 6} width="12" height="8" fill="#eef6ff" />
          <path d={`M${tx + 4} ${ty + 10}h8`} stroke={fill} strokeWidth="2" />
        </g>
      ))}
    </Icon>
  ),
  autoScroll: (
    <Icon>
      <Axes />
      <path d="M20 10l7 7-7 7z" fill="#43d12f" stroke="#1d7d17" strokeWidth="2" />
    </Icon>
  ),
  shift: (
    <Icon>
      <Axes />
      <path d="M21 6v20" stroke="#33669e" strokeWidth="2" />
      <path d="M33 17h-6M28 13l-5 4 5 4z" fill="#b33514" stroke="#b33514" strokeWidth="2" />
    </Icon>
  ),
  indicators: (
    <Icon>
      <path d="M3 2h14l7 7v19H3z" fill="#fff" stroke="#888" strokeWidth="2" />
      <path d="M17 2v7h7" stroke="#888" strokeWidth="2" />
      <path d="M15 8q-5-2-5 5v11M6 14h9" stroke="#444" strokeWidth="2" />
      <Plus x={12} y={13} />
    </Icon>
  ),
  clock: (
    <Icon>
      <circle cx="18" cy="18" r="16" fill="#2f72d6" stroke="#17449a" />
      <circle cx="18" cy="18" r="11" fill="#f7f9fc" stroke="#a9c3ec" strokeWidth="2" />
      <path d="M18 10v8h7" stroke="#333" strokeWidth="2" />
    </Icon>
  ),
  template: (
    <Icon>
      <rect x="2" y="3" width="32" height="30" fill="#fff" stroke="#3a76bd" strokeWidth="2" />
      <path d="M2 6h32" stroke="#3a76bd" strokeWidth="5" />
      <path d="M2 20h32" stroke="#3a76bd" strokeWidth="2" />
      <path d="M6 17l5-3h4l4-3h4l5-1" stroke="#8b2d17" strokeWidth="2" />
      <path d="M6 29l6-4 5 3 5-5 4 4h4" stroke="#2b9a22" strokeWidth="2" />
    </Icon>
  ),
  cursor: (
    <Icon>
      <path d="M10 4v24l5-5 4 10 4-2-4-9h7z" fill="#444" />
    </Icon>
  ),
  crosshair: (
    <Icon>
      <path d="M18 3v12M18 21v12M3 18h12M21 18h12" stroke="#555" strokeWidth="2" />
    </Icon>
  ),
  vline: (
    <Icon>
      <path d="M18 5v26" stroke="#444" strokeWidth="2" />
    </Icon>
  ),
  hline: (
    <Icon>
      <path d="M6 18h25" stroke="#444" strokeWidth="2" />
    </Icon>
  ),
  trend: (
    <Icon>
      <path d="M6 31L30 6" stroke="#555" strokeWidth="2" />
    </Icon>
  ),
  channel: (
    <Icon>
      <path d="M4 30L22 7M10 31L28 8M8 17l-1 13M14 12l-1 16M20 8l-1 14M26 3l-1 16" stroke="#444" strokeWidth="2" />
      <path d="M35 26h-7v8h7M28 30h6" stroke="#444" strokeWidth="2" />
    </Icon>
  ),
  fibo: (
    <Icon>
      <path d="M4 4h27M4 11h27M4 18h27M4 26h17" stroke="#555" strokeWidth="2" strokeDasharray="2 2" />
      <path d="M25 34v-9h8M25 29h6" stroke="#444" strokeWidth="2" />
    </Icon>
  ),
  label: (
    <Icon>
      <rect x="6" y="6" width="24" height="26" stroke="#666" strokeWidth="2" strokeDasharray="2 2" />
      <path d="M11 12h14M18 12v16" stroke="#444" strokeWidth="3" />
      <path d="M3 3h5v5H3z" fill="#444" />
    </Icon>
  ),
  arrows: (
    <Icon>
      <path d="M11 4l7 8h-4v3H8v-3H4zM24 31l-7-7h4v-4h6v4h4z" fill="#444" />
      <path d="M8 20l5 5 8-11" stroke="#555" strokeWidth="2" />
    </Icon>
  ),
  chartWindow: (
    <Icon size={30}>
      <rect x="2" y="3" width="25" height="20" rx="2" fill="#fff" stroke="#5f93e0" strokeWidth="2" />
      <path d="M2 6h25" stroke="#5f93e0" strokeWidth="3" strokeDasharray="3 1" />
      <path d="M6 14h3v-3M12 14v-4l5 4h4" stroke="#5f7be0" strokeWidth="2" />
      <rect x="9" y="15" width="25" height="18" rx="2" fill="#fff" stroke="#5f93e0" strokeWidth="2" />
      <path d="M9 18h25" stroke="#8fb7ee" strokeWidth="2" />
      <path d="M14 22l4 7 3-7 4 7 3-6" stroke="#5f7be0" strokeWidth="2" />
    </Icon>
  ),
  accounts: (
    <Icon size={36}>
      <circle cx="11" cy="9" r="7" fill="#f0a63a" stroke="#b87718" />
      <path d="M4 17h14v12H4z" fill="#e3a13a" />
      <circle cx="24" cy="9" r="8" fill="#e9c64a" stroke="#a5811e" />
      <circle cx="7" cy="26" r="7" fill="#5bd33f" stroke="#2c8f19" />
      <path d="M13 34V22q3-6 11-6t11 6v12z" fill="#deb33b" stroke="#a5811e" />
      <path d="M24 19l9 13" stroke="#fdf1b4" strokeWidth="3" />
    </Icon>
  ),
  functions: (
    <Icon size={32}>
      <rect x="2" y="2" width="32" height="31" rx="3" fill="#f7dd77" stroke="#c79f33" strokeWidth="2" />
      <path d="M25 8q-6-1-7 6l-2 9q-1 4-6 3M12 16h11" stroke="#7a5a10" strokeWidth="3" />
    </Icon>
  ),
  experts: (
    <Icon size={36}>
      <path d="M7 14q2 14 14 13 8-2 9-13z" fill="#f7dd77" stroke="#c79f33" />
      <ellipse cx="18" cy="12" rx="17" ry="6" fill="#5aa7dd" stroke="#26709f" />
      <path d="M9 9c1-9 17-9 18 0-4 3-14 3-18 0z" fill="#8ccaf0" stroke="#26709f" />
      <path d="M28 19l7 7-7 7-7-7z" fill="#eec847" stroke="#a07c1a" strokeWidth="2" />
    </Icon>
  ),
  scripts: (
    <Icon size={34}>
      <path d="M3 3h26v5h-4v17H7V8H3z" fill="#f7dd77" stroke="#b68e28" strokeWidth="2" />
      <path d="M2 29h22v-5H2z" fill="#f7dd77" stroke="#b68e28" strokeWidth="2" />
      <path d="M11 12h3M17 12h4M11 17h9" stroke="#8d6d1a" strokeWidth="2" />
      <path d="M26 20l7 7-7 7-7-7z" fill="#eec847" stroke="#a07c1a" strokeWidth="2" />
    </Icon>
  ),
};

const QuoteArrow = ({ up }) => (
  <svg width="22" height="20" viewBox="0 0 22 20" aria-hidden="true">
    {up ? (
      <path d="M11 2l9 9h-5v7H7v-7H2z" fill="#4cc035" stroke="#1d7d17" strokeWidth="2" />
    ) : (
      <path d="M11 18l9-8h-5V3H7v7H2z" fill="#ee6a35" stroke="#a33411" strokeWidth="2" />
    )}
  </svg>
);

const glyphs = {
  min: <path d="M3 14h18" stroke="#000" strokeWidth="6" />,
  max: <rect x="5" y="5" width="14" height="10" fill="none" stroke="#000" strokeWidth="5" />,
  restore: (
    <g fill="none" stroke="#000">
      <rect x="4" y="8" width="11" height="11" strokeWidth="4" />
      <path d="M6 3h14v13" strokeWidth="2" />
    </g>
  ),
  close: <path d="M4 3l15 14M19 3L4 17" stroke="#000" strokeWidth="5" />,
};

const Glyph = ({ name, size = 24 }) => (
  <svg width={size} height={size} viewBox="0 0 24 22" aria-hidden="true">
    {glyphs[name]}
  </svg>
);

// ---------------------------------------------------------------- parts

const Tool = ({ icon, label, down, split, text, width, disabled }) => (
  <ToolButton type="button" aria-label={text ? undefined : label} aria-pressed={down} $down={down} $split={split} $width={width} disabled={disabled}>
    {icon && icons[icon]}
    {text}
    {split && <Caret />}
  </ToolButton>
);

const Tabs = ({ items, pad = 22, label }) => {
  const [active, setActive] = useState(0);
  return (
    <TabBar role="tablist" aria-label={label}>
      {items.map(([name, count], i) => (
        <Tab key={name} type="button" role="tab" aria-selected={i === active} $active={i === active} $pad={pad} onClick={() => setActive(i)}>
          {name}
          {count && <Count>{count}</Count>}
        </Tab>
      ))}
    </TabBar>
  );
};

const PanelHead = ({ children }) => (
  <PanelTitle>
    <h2>{children}</h2>
    <PanelClose type="button" aria-label={`Chiudi ${children}`}>
      <Glyph name="close" size={14} />
    </PanelClose>
  </PanelTitle>
);

const ChartWindow = ({ chart, active }) => (
  <Window $active={active}>
    <WindowTitle>
      <WindowIcon>{icons.chartWindow}</WindowIcon>
      <h2>{chart.name}</h2>
      <WindowButton type="button" aria-label="Riduci a icona">
        <Glyph name="min" />
      </WindowButton>
      <WindowButton type="button" aria-label="Ingrandisci">
        <Glyph name="max" />
      </WindowButton>
      <WindowButton type="button" aria-label="Chiudi" $alert={active}>
        <Glyph name="close" />
      </WindowButton>
    </WindowTitle>
    <Client>
      <Chart chart={chart} />
    </Client>
  </Window>
);

const TreeItem = ({ icon, name, expandable }) => (
  <TreeRow>
    <Branch>{expandable && <Expander type="button" aria-label={`Espandi ${name}`} />}</Branch>
    <TreeIcon>{icons[icon]}</TreeIcon>
    {name}
  </TreeRow>
);

const App = () => (
  <Page>
    <GlobalStyle />
    <TitleBar>
      <Logo>axi</Logo>
      <h1>MetaTrader 4 Axi Terminal - EURUSD,H4</h1>
      <SystemButtons>
        <SystemButton type="button" aria-label="Riduci a icona" $width={56}>
          <Glyph name="min" />
        </SystemButton>
        <SystemButton type="button" aria-label="Ripristina" $width={51}>
          <Glyph name="restore" />
        </SystemButton>
        <SystemButton type="button" aria-label="Chiudi" $width={90} $alert>
          <Glyph name="close" />
        </SystemButton>
      </SystemButtons>
    </TitleBar>

    <Menu>
      {["File", "Visualizza", "Inserisci", "Grafici", "Strumenti", "Finestra", "Aiuto"].map((item) => (
        <button type="button" key={item}>
          {item}
        </button>
      ))}
    </Menu>

    <Toolbar>
      <ToolGroup>
        <Grip />
        <Tool icon="newChart" label="Nuovo grafico" split />
        <Tool icon="profiles" label="Profili" split />
        <Divider />
        <Tool icon="market" label="Vista del mercato" down />
        <Tool icon="target" label="Finestra dati" />
        <Tool icon="folderStar" label="Navigatore" down />
        <Tool icon="dataWindow" label="Terminale" down />
        <Tool icon="tester" label="Tester di strategia" />
        <Divider />
        <Tool icon="order" text="Nuovo ordine" width={204} disabled />
        <Tool icon="book" label="MetaEditor" />
        <Tool icon="vps" label="Hosting virtuale" />
        <Tool icon="signals" label="Segnali" />
        <Tool icon="autoTrading" text="AutoTrading" width={190} />
      </ToolGroup>
      <ToolGroup $next>
        <Grip />
        <Tool icon="barChart" label="Grafico a barre" />
        <Tool icon="candleChart" label="Grafico a candele" down />
        <Tool icon="lineChart" label="Grafico a linee" />
        <Divider />
        <Tool icon="zoomIn" label="Zoom avanti" />
        <Tool icon="zoomOut" label="Zoom indietro" />
        <Tool icon="tile" label="Affianca finestre" />
        <Divider />
        <Tool icon="autoScroll" label="Scorrimento automatico" down />
        <Tool icon="shift" label="Sposta grafico" />
        <Divider />
        <Tool icon="indicators" label="Indicatori" split />
        <Tool icon="clock" label="Periodi" split />
        <Tool icon="template" label="Modelli" split />
      </ToolGroup>
      <ToolEnd>
        <IconButton type="button" aria-label="Cerca">
          <svg width="30" height="30" viewBox="0 0 30 30" fill="none">
            <path d="M3 27l10-10" stroke="#2d55b8" strokeWidth="5" strokeLinecap="round" />
            <circle cx="18" cy="11" r="9" fill="#fff" stroke="#3c6bdc" strokeWidth="2" />
          </svg>
        </IconButton>
        <IconButton type="button" aria-label="Messaggi">
          <svg width="34" height="28" viewBox="0 0 34 28">
            <path d="M12 2c14-3 22 14 3 17l-4 1-4 6v-7C0 16-1 5 12 2z" fill="#ececf0" stroke="#a5a5a5" strokeWidth="2" />
          </svg>
          <Badge>1</Badge>
        </IconButton>
      </ToolEnd>
    </Toolbar>

    <Toolbar $last>
      <ToolGroup>
        <Grip />
        <Tool icon="cursor" label="Cursore" down />
        <Tool icon="crosshair" label="Mirino" />
        <Divider />
        <Tool icon="vline" label="Linea verticale" />
        <Tool icon="hline" label="Linea orizzontale" />
        <Tool icon="trend" label="Linea di tendenza" />
        <Tool icon="channel" label="Canale" />
        <Tool icon="fibo" label="Fibonacci" />
        <Tool text={<BigLetter>A</BigLetter>} />
        <Tool icon="label" label="Etichetta" />
        <Tool icon="arrows" label="Frecce" split />
      </ToolGroup>
      <ToolGroup $next>
        <Grip />
        {["M1", "M5", "M15", "M30", "H1", "H4", "D1", "W1", "MN"].map((period) => (
          <Tool key={period} text={<Period>{period}</Period>} down={period === "H4"} />
        ))}
      </ToolGroup>
    </Toolbar>

    <Workspace>
      <Sidebar>
        <Panel>
          <PanelHead>Vista del mercato: 16:24:53</PanelHead>
          <MarketList>
            <MarketTable>
              <thead>
                <tr>
                  <th>Simbolo</th>
                  <th>Offe...</th>
                  <th>Rich...</th>
                </tr>
              </thead>
              <tbody>
                {quotes.map(([symbol, bid, ask, up], i) => (
                  <Quote key={i} $up={up}>
                    <td>
                      <QuoteArrow up={up} />
                      {symbol}
                    </td>
                    <td>{bid}</td>
                    <td>{ask}</td>
                  </Quote>
                ))}
              </tbody>
            </MarketTable>
            <ScrollBar>
              <button type="button" aria-label="Su">
                <svg width="16" height="12" viewBox="0 0 16 12" fill="none">
                  <path d="M1 10l7-7 7 7" stroke="#555" strokeWidth="2" />
                </svg>
              </button>
              <ScrollThumb />
              <button type="button" aria-label="Giù">
                <svg width="16" height="12" viewBox="0 0 16 12" fill="none">
                  <path d="M1 2l7 7 7-7" stroke="#555" strokeWidth="2" />
                </svg>
              </button>
            </ScrollBar>
          </MarketList>
          <Tabs label="Vista del mercato" items={[["Simboli"], ["Grafico tick"]]} />
        </Panel>
        <Panel $grow>
          <PanelHead>Navigatore</PanelHead>
          <Tree>
            <TreeRoot>
              {icons.chartWindow}
              Axi MT4
            </TreeRoot>
            <TreeItem icon="accounts" name="Conti" />
            <TreeItem icon="functions" name="Indicatori" expandable />
            <TreeItem icon="experts" name="Consiglieri esperti" expandable />
            <TreeItem icon="scripts" name="Programmi" expandable />
          </Tree>
          <Tabs label="Navigatore" items={[["Comune"], ["Preferiti"]]} />
        </Panel>
      </Sidebar>

      <Main>
        <Mdi>
          {charts.map((chart, i) => (
            <ChartWindow key={chart.name} chart={chart} active={i === 0} />
          ))}
        </Mdi>
        <MdiTabs>
          <Tabs label="Grafici" pad={24} items={[["EURUSD,H4"], ["USDCHF,H4"], ["GBPUSD,H4"], ["USDJPY,H4"]]} />
          <Pager>
            <button type="button" aria-label="Precedente">
              <svg width="8" height="14" viewBox="0 0 8 14">
                <path d="M7 0v14L0 7z" fill="#888" />
              </svg>
            </button>
            <button type="button" aria-label="Successivo">
              <svg width="8" height="14" viewBox="0 0 8 14">
                <path d="M1 0v14l7-7z" fill="#888" />
              </svg>
            </button>
          </Pager>
        </MdiTabs>
      </Main>
    </Workspace>

    <Terminal>
      <TerminalSide>
        <PanelClose type="button" aria-label="Chiudi terminale">
          <Glyph name="close" size={14} />
        </PanelClose>
        <h2>Terminale</h2>
      </TerminalSide>
      <TerminalBody>
        <AlertArea>
          <AlertTable>
            <thead>
              <tr>
                <Column $width={201}>Simbolo</Column>
                <Column $width={240}>Condizione</Column>
                <Column $width={192} $right>Contatore</Column>
                <Column $width={192} $right>Limite</Column>
                <Column $width={192}>Tempo scaduto</Column>
                <Column $width={330} $right>Espirazione</Column>
                <Column>Evento</Column>
              </tr>
            </thead>
          </AlertTable>
        </AlertArea>
        <Tabs
          label="Terminale"
          items={[
            ["Allarmi"],
            ["Casella postale", 6],
            ["Mercato", 81],
            ["Articoli", 1],
            ["Biblioteca"],
            ["Consiglieri"],
            ["Diario"],
          ]}
        />
      </TerminalBody>
    </Terminal>

    <StatusBar>
      <StatusHelp>Per aiuto, premi F1</StatusHelp>
      <StatusCell $width={232}>Default</StatusCell>
      <StatusCell $width={204}>2021.05.03 03:00</StatusCell>
      <StatusCell $width={142}>O: 1.2034</StatusCell>
      <StatusCell $width={142}>H: 1.2035</StatusCell>
      <StatusCell $width={136}>L: 1.2017</StatusCell>
      <StatusCell $width={140}>C: 1.2021</StatusCell>
      <StatusCell $width={132}>V: 4681</StatusCell>
      <StatusCell $width={260}>
        <svg width="46" height="26" viewBox="0 0 46 26" aria-hidden="true">
          {Array.from({ length: 8 }, (_, i) => (
            <path key={i} d={`M${2 + i * 6} 0v26`} stroke="#8c1d0d" strokeWidth="4" />
          ))}
          <path d="M0 20L46 5" stroke="#f0f0f0" strokeWidth="2" />
        </svg>
        Connessione asse
      </StatusCell>
    </StatusBar>
  </Page>
);

// ---------------------------------------------------------------- styles

const GlobalStyle = createGlobalStyle`
  * {
    box-sizing: border-box;
  }
  body {
    margin: 0;
    background: #f0f0f0;
    color: #111;
    font-family: "Open Sans", "Noto Sans", sans-serif;
    font-size: 22px;
    line-height: 30px;
  }
  h1, h2 {
    margin: 0;
    font-weight: 400;
  }
  button {
    margin: 0;
    padding: 0;
    border: 0;
    background: none;
    color: inherit;
    font: inherit;
  }
  svg {
    display: block;
    flex: none;
  }
`;

const Page = styled.div`
  display: flex;
  flex-direction: column;
  min-height: 100vh;
  overflow: hidden;
`;

const TitleBar = styled.header`
  display: flex;
  align-items: flex-start;
  height: 43px;
  background: #7ec8e5;
  h1 {
    flex: 1;
    padding-left: 172px;
    font-size: 29px;
    line-height: 40px;
    text-align: center;
  }
`;

const Logo = styled.span`
  width: 31px;
  height: 32px;
  margin-top: 3px;
  background: #fff;
  color: #f0414f;
  font-size: 18px;
  font-weight: 700;
  line-height: 30px;
  text-align: center;
`;

const SystemButtons = styled.div`
  display: flex;
  margin-right: 5px;
  border: 2px solid #33525e;
  border-top: 0;
`;

const SystemButton = styled.button`
  display: grid;
  place-items: center;
  width: ${({ $width }) => $width}px;
  height: 35px;
  background: ${({ $alert }) => ($alert ? "#b86053" : "none")};
  & + & {
    border-left: 2px solid #33525e;
  }
`;

const Menu = styled.nav`
  display: flex;
  align-items: flex-start;
  gap: 37px;
  height: 44px;
  padding: 4px 9px;
  border-bottom: 2px solid #fff;
  box-shadow: inset 0 -2px #a0a0a0;
`;

const Toolbar = styled.div`
  display: flex;
  height: ${({ $last }) => ($last ? 51 : 54)}px;
`;

const ToolGroup = styled.div`
  display: flex;
  align-items: center;
  gap: 6px;
  padding-right: 4px;
  padding-left: ${({ $next }) => ($next ? 9 : 0)}px;
  border-right: 2px solid #a0a0a0;
  border-bottom: 2px solid #fff;
  box-shadow: inset 0 -2px #a0a0a0;
`;

const Grip = styled.span`
  width: 4px;
  height: 38px;
  background: repeating-linear-gradient(#999 0 2px, transparent 2px 4px);
`;

const Divider = styled.span`
  width: 2px;
  height: 42px;
  margin: 0 2px;
  background: #a0a0a0;
`;

const ToolButton = styled.button`
  display: flex;
  align-items: center;
  justify-content: ${({ $width, $split }) => ($width || $split ? "flex-start" : "center")};
  gap: 6px;
  width: ${({ $width, $split }) => $width || ($split ? 68 : 50)}px;
  height: 44px;
  padding-left: ${({ $width, $split }) => ($width || $split ? 4 : 0)}px;
  border: 2px solid transparent;
  white-space: nowrap;
  ${({ $down }) =>
    $down &&
    `
    background: #f8f8f8;
    border-color: #a0a0a0 #fff #fff #a0a0a0;
  `}
  &:disabled {
    color: #a0a0a0;
  }
`;

const Caret = styled.i`
  border: 6px solid transparent;
  border-top: 8px solid #000;
  border-bottom: 0;
`;

const BigLetter = styled.span`
  padding-top: 2px;
  color: #444;
  font-size: 24px;
  font-weight: 600;
`;

const Period = styled.span`
  padding-top: 3px;
  color: #444;
  font-size: 18px;
`;

const ToolEnd = styled.div`
  display: flex;
  align-items: center;
  gap: 22px;
  margin-left: auto;
  padding: 0 22px 2px 0;
`;

const IconButton = styled.button`
  position: relative;
`;

const Badge = styled.span`
  position: absolute;
  top: -9px;
  right: -8px;
  width: 33px;
  height: 33px;
  border-radius: 50%;
  background: linear-gradient(#e06850, #c42d17);
  color: #fff;
  line-height: 32px;
`;

const Workspace = styled.div`
  display: flex;
`;

const Sidebar = styled.aside`
  display: flex;
  flex: none;
  flex-direction: column;
  width: 370px;
  padding-bottom: 4px;
`;

const Panel = styled.section`
  display: flex;
  flex: ${({ $grow }) => ($grow ? 1 : "none")};
  flex-direction: column;
  padding: 3px 8px ${({ $grow }) => ($grow ? 7 : 9)}px 2px;
  border-top: 2px solid #a0a0a0;
  border-right: 2px solid #a0a0a0;
  border-bottom: ${({ $grow }) => ($grow ? "2px solid #a0a0a0" : 0)};
`;

const PanelTitle = styled.div`
  display: flex;
  align-items: center;
  gap: 8px;
  h2 {
    flex: 1;
    padding-left: 3px;
    background: linear-gradient(90deg, #bccadb, #d7e3f1);
    font-size: 20px;
    line-height: 26px;
  }
`;

const PanelClose = styled.button`
  display: grid;
  place-items: center;
  width: 18px;
  height: 24px;
`;

const MarketList = styled.div`
  display: flex;
  height: 537px;
  margin-top: 3px;
  overflow: hidden;
  border-top: 2px solid #a0a0a0;
  border-left: 1px solid #a0a0a0;
  background: #fff;
`;

const MarketTable = styled.table`
  flex: 1;
  height: max-content;
  border-collapse: collapse;
  table-layout: fixed;
  th {
    height: 38px;
    padding: 0 12px 2px;
    border-right: 2px solid #e0e0e0;
    border-bottom: 2px solid #ccc;
    background: #fcfcfc;
    font-weight: 400;
    text-align: right;
  }
  th:first-child {
    width: 137px;
    text-align: left;
  }
  th:nth-child(2) {
    width: 92px;
  }
  th:last-child {
    border-right-color: #ccc;
  }
`;

const Quote = styled.tr`
  color: ${({ $up }) => ($up ? "#1414ff" : "#ff2a2a")};
  td {
    height: 40px;
    padding: 0 4px 4px;
    border-right: 2px solid #c8c8c8;
    border-bottom: 2px solid #c8c8c8;
    line-height: 34px;
    text-align: right;
  }
  td:first-child {
    display: flex;
    align-items: center;
    gap: 9px;
    padding-left: 8px;
    color: #111;
  }
`;

const ScrollBar = styled.div`
  display: flex;
  flex-direction: column;
  width: 33px;
  background: #fdfdfd;
  button {
    display: grid;
    place-items: center;
    height: 33px;
    border: 2px solid #ddd;
  }
  button:last-child {
    margin-top: auto;
  }
`;

const ScrollThumb = styled.div`
  display: grid;
  place-items: center;
  height: 156px;
  border: 2px solid #a8a8a8;
  background: #dadada;
  &::before {
    content: "";
    width: 14px;
    height: 16px;
    background: repeating-linear-gradient(#606060 0 4px, transparent 4px 6px);
  }
`;

const TabBar = styled.div`
  display: flex;
  height: 40px;
  padding-left: 4px;
  border-top: 2px solid #000;
`;

const Tab = styled.button`
  display: flex;
  align-items: center;
  position: relative;
  height: ${({ $active }) => ($active ? 40 : 36)}px;
  margin-top: ${({ $active }) => ($active ? -2 : 0)}px;
  padding: 0 ${({ $pad, $active }) => ($active ? $pad - 2 : $pad)}px;
  color: ${({ $active }) => ($active ? "#111" : "#777")};
  white-space: nowrap;
  ${({ $active }) =>
    $active
      ? `
    background: #fff;
    border: solid #000;
    border-width: 0 2px 2px;
    box-shadow: 2px 2px #888;
  `
      : `
    &::after {
      content: "";
      position: absolute;
      right: 0;
      top: 6px;
      width: 2px;
      height: 27px;
      background: #777;
    }
  `}
`;

const Count = styled.span`
  padding: 16px 0 0 4px;
  color: #e03030;
  font-size: 17px;
  font-weight: 600;
`;

const Tree = styled.div`
  flex: 1;
  padding-left: 12px;
  border-top: 2px solid #a0a0a0;
  border-left: 1px solid #a0a0a0;
  margin-top: 3px;
  background: #fff;
`;

const TreeRoot = styled.div`
  display: flex;
  align-items: center;
  gap: 12px;
  height: 36px;
`;

const TreeRow = styled.div`
  display: flex;
  align-items: center;
  height: 36px;
`;

const Branch = styled.span`
  display: flex;
  align-items: center;
  align-self: stretch;
  width: 38px;
  padding-left: 5px;
  background:
    repeating-linear-gradient(#888 0 2px, transparent 2px 4px) 14px 0 / 2px 100% no-repeat,
    repeating-linear-gradient(90deg, #888 0 2px, transparent 2px 4px) 16px 50% / 22px 2px no-repeat;
  ${TreeRow}:last-child & {
    background-size: 2px 50%, 22px 2px;
  }
`;

const Expander = styled.button`
  width: 18px;
  height: 18px;
  border: 2px solid #999;
  background:
    linear-gradient(#222, #222) center / 10px 2px no-repeat,
    linear-gradient(#222, #222) center / 2px 10px no-repeat,
    #eee;
`;

const TreeIcon = styled.span`
  width: 45px;
`;

const Main = styled.main`
  flex: 1;
  min-width: 0;
`;

const Mdi = styled.div`
  display: grid;
  grid-template-columns: 1fr 1fr;
  gap: 4px;
  margin-right: 4px;
  border: 4px solid #4a4a4a;
  border-top-color: #5c5c5c;
  background: #4a4a4a;
`;

const Window = styled.section`
  padding: 0 16px 15px;
  background: ${({ $active }) => ($active ? "#abbed9" : "#e8eeff")};
`;

const WindowTitle = styled.div`
  display: flex;
  align-items: center;
  gap: 4px;
  height: 62px;
  padding: 12px 3px 0;
  h2 {
    flex: 1;
    font-size: 28px;
    text-align: center;
  }
`;

const WindowIcon = styled.span`
  width: 34px;
`;

const WindowButton = styled.button`
  display: grid;
  place-items: center;
  width: 36px;
  height: 36px;
  border: 2px solid ${({ $alert }) => ($alert ? "#b5604c" : "#8492b0")};
  background: ${({ $alert }) => ($alert ? "#c0674f" : "none")};
`;

const Client = styled.div`
  border: 2px solid #fff;
  border-top-color: #777;
  border-left-color: #777;
  background: #000;
`;

const ChartSvg = styled.svg`
  width: 100%;
  height: auto;
  text {
    fill: #fff;
    font-size: 18px;
    white-space: pre;
  }
`;

const PriceText = styled.text`
  && {
    fill: #000;
  }
`;

const InfoText = styled.text`
  && {
    font-size: 19px;
  }
`;

const MdiTabs = styled.div`
  display: flex;
  margin-top: 4px;
  border-top: 2px solid #000;
  ${TabBar} {
    flex: 1;
    margin-top: -2px;
    padding-left: 10px;
  }
`;

const Pager = styled.div`
  display: flex;
  align-items: center;
  gap: 30px;
  padding-right: 20px;
`;

const Terminal = styled.section`
  display: flex;
  flex: 1;
  margin-top: 7px;
`;

const TerminalSide = styled.div`
  display: flex;
  flex-direction: column;
  width: 24px;
  padding-bottom: 4px;
  h2 {
    flex: 1;
    margin-top: 4px;
    padding-top: 6px;
    background: linear-gradient(#9cb0cd, #b9cee9);
    font-size: 20px;
    line-height: 22px;
    writing-mode: vertical-rl;
    transform: rotate(180deg);
  }
`;

const TerminalBody = styled.div`
  display: flex;
  flex: 1;
  flex-direction: column;
  margin-right: 8px;
  border: solid #a0a0a0;
  border-width: 2px 0 0 2px;
  ${TabBar} {
    height: 50px;
    padding-left: 4px;
  }
`;

const AlertArea = styled.div`
  flex: 1;
  background: #fff;
`;

const AlertTable = styled.table`
  width: 100%;
  border-collapse: collapse;
  table-layout: fixed;
`;

const Column = styled.th`
  width: ${({ $width }) => ($width ? `${$width}px` : "auto")};
  height: 38px;
  padding: 0 12px;
  border-right: 2px solid #e0e0e0;
  border-bottom: 2px solid #e0e0e0;
  background: #fcfcfc;
  font-weight: 400;
  text-align: ${({ $right }) => ($right ? "right" : "left")};
  white-space: nowrap;
`;

const StatusBar = styled.footer`
  display: flex;
  height: 44px;
  padding-top: 6px;
  border-top: 2px solid #a0a0a0;
  box-shadow: inset 0 2px #fff;
  line-height: 38px;
  white-space: nowrap;
`;

const StatusHelp = styled.span`
  flex: 1;
`;

const StatusCell = styled.span`
  display: flex;
  align-items: center;
  gap: 8px;
  width: ${({ $width }) => $width}px;
  padding-left: 10px;
  overflow: hidden;
  border-left: 2px solid #a0a0a0;
`;

export default App;
